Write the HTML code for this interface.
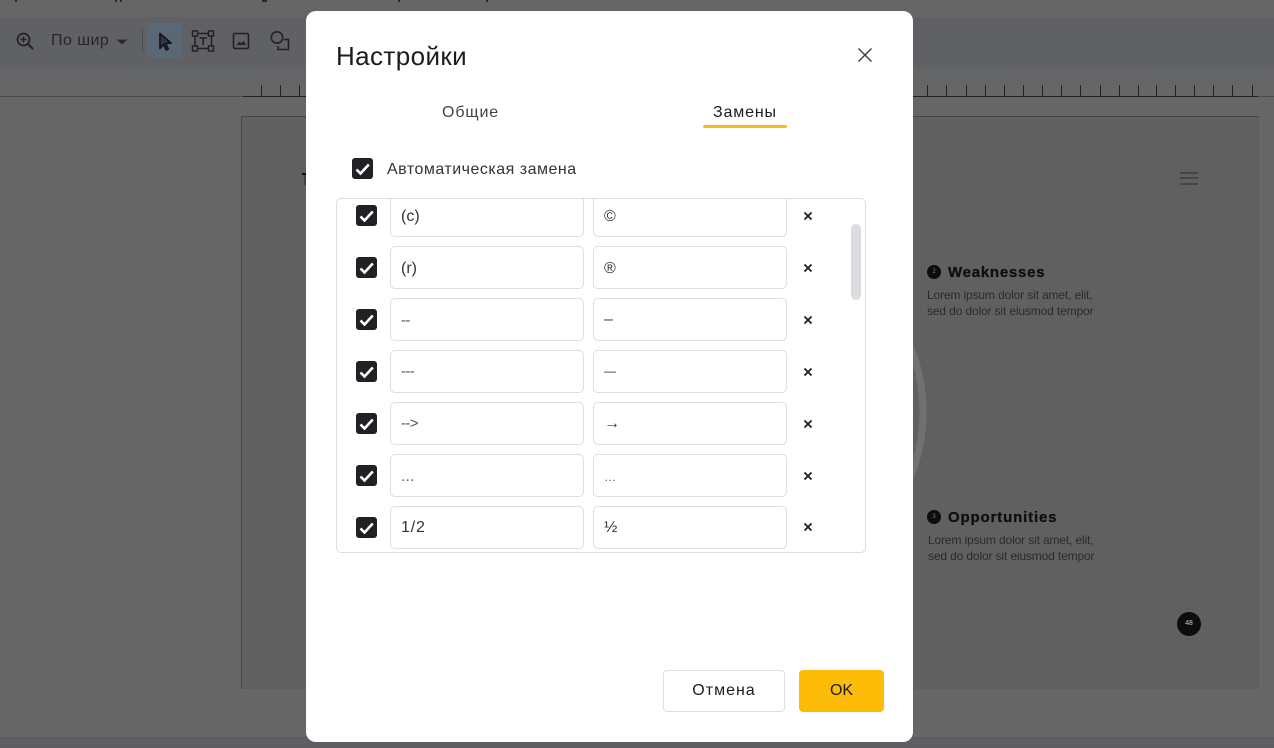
<!DOCTYPE html>
<html lang="ru">
<head>
<meta charset="utf-8">
<title>Настройки</title>
<style>
html,body{margin:0;padding:0;width:1274px;height:748px;overflow:hidden;background:#666666;font-family:"Liberation Sans","DejaVu Sans",sans-serif}
.a{position:absolute}
#toolbar{left:0;top:17px;width:1274px;height:50px;background:#5f6164}
#strip{left:0;top:67px;width:1274px;height:30px;background:linear-gradient(#646566,#666)}
#bottom{left:0;top:737px;width:1274px;height:11px;background:#5e5f62;border-top:1px solid #5a5b5c;box-sizing:border-box}
#slide{left:241px;top:116px;width:1018px;height:573px;background:#606060;border-top:1px solid #464646;border-left:1px solid #464646;border-right:1px solid #5b5b5b;box-sizing:border-box}
.tk{position:absolute;top:85px;width:1px;height:11px;background:#222}
.d{position:absolute;top:0;height:2px;width:2px;background:#2a2a2a}
.h{position:absolute;font-weight:bold;font-size:15px;color:#0f0f0f;letter-spacing:.7px;line-height:18px;white-space:nowrap;-webkit-text-stroke:.3px #0f0f0f}
.p{position:absolute;font-size:12px;line-height:16px;color:#2a2b2d;white-space:nowrap;letter-spacing:-.14px}
.n{position:absolute;width:14px;height:14px;border-radius:50%;background:#0d0d0d;color:#777;font-size:6px;line-height:14px;text-align:center}
#dialog{left:306px;top:11px;width:607px;height:731px;background:#fff;border-radius:10px}
.txt{position:absolute;white-space:nowrap;color:#1f1f1f}
.cb{position:absolute;width:21px;height:21px;background:#202124;border-radius:3px}
.cb svg{display:block}
.in{position:absolute;width:194px;height:43px;box-sizing:border-box;border:1px solid #dcdee0;border-radius:5px;background:#fff;font-size:16px;line-height:43px;padding-left:10px;color:#333;white-space:nowrap}
.x{position:absolute;left:802px;width:12px;height:12px}
.lt{color:#555;letter-spacing:-.6px;font-size:15px}
</style>
</head>
<body>
<div class="d" style="left:15px"></div><div class="d" style="left:115px"></div><div class="d" style="left:120px"></div><div class="d" style="left:262px;width:5px"></div><div class="d" style="left:398px"></div><div class="d" style="left:486px"></div>

<div class="a" id="toolbar"></div>
<div class="a" id="strip"></div>
<div class="a" style="left:0;top:96px;width:1274px;height:1px;background:#4b4b4b"></div>
<div class="a" style="left:243px;top:96px;width:64px;height:1px;background:#222"></div>
<div class="a" style="left:913px;top:96px;width:345px;height:1px;background:#222"></div>

<div class="tk" style="left:261px"></div><div class="tk" style="left:280px"></div><div class="tk" style="left:299px"></div>
<div class="tk" style="left:927px"></div><div class="tk" style="left:946px"></div><div class="tk" style="left:966px"></div><div class="tk" style="left:985px"></div><div class="tk" style="left:1004px"></div><div class="tk" style="left:1023px"></div><div class="tk" style="left:1042px"></div><div class="tk" style="left:1061px"></div><div class="tk" style="left:1080px"></div><div class="tk" style="left:1100px"></div><div class="tk" style="left:1119px"></div><div class="tk" style="left:1138px"></div><div class="tk" style="left:1156px"></div><div class="tk" style="left:1175px"></div><div class="tk" style="left:1194px"></div><div class="tk" style="left:1213px"></div><div class="tk" style="left:1232px"></div><div class="tk" style="left:1252px"></div>

<svg class="a" style="left:0;top:17px" width="306" height="50" viewBox="0 17 306 50" fill="none">
  <circle cx="23.500" cy="39.500" r="6" stroke="#222" stroke-width="1.700"/>
  <path d="M28 44l5 5" stroke="#222" stroke-width="2"/>
  <path d="M23.500 36.500v6M20.500 39.500h6" stroke="#222" stroke-width="1.400"/>
  <path d="M116.500 39.500h11l-5.500 5z" fill="#2a2a2a"/>
  <rect x="142" y="29" width="1" height="23" fill="#4a4b4d"/>
  <rect x="147" y="23" width="35" height="35" rx="3" fill="#5a6875"/>
  <path d="M160 33.500l0 15 3.500-4 2.800 5.500 2-1-2.700-5.500 5.400-.5z" fill="#2c3644" stroke="#10141c" stroke-width="1.700" stroke-linejoin="round"/>
  <path d="M194 33.500h18M194 48.500h18M195 33v16M211.500 33v16" stroke="#222" stroke-width="1.500"/>
  <rect x="192.500" y="31" width="5" height="5" fill="#5f6164" stroke="#222" stroke-width="1.500"/>
  <rect x="208.500" y="31" width="5" height="5" fill="#5f6164" stroke="#222" stroke-width="1.500"/>
  <rect x="192.500" y="46" width="5" height="5" fill="#5f6164" stroke="#222" stroke-width="1.500"/>
  <rect x="208.500" y="46" width="5" height="5" fill="#5f6164" stroke="#222" stroke-width="1.500"/>
  <path d="M199.500 38h7.500M203.200 38v7" stroke="#222" stroke-width="1.600"/>
  <rect x="233.500" y="33.500" width="15" height="15" rx="1.500" stroke="#222" stroke-width="1.600"/>
  <path d="M236.500 45l3-3.500 2 2 2-2.800 2.500 4.300z" fill="#222"/>
  <circle cx="277" cy="37.500" r="5.700" stroke="#222" stroke-width="1.600"/>
  <path d="M284 39.500h4.500v10h-10.500v-3.500" stroke="#222" stroke-width="1.600"/>
</svg>
<div class="a txt" style="left:51px;top:31px;font-size:16px;line-height:20px;color:#262626;letter-spacing:.45px">По шир</div>

<div class="a" id="slide"></div>
<div class="a" style="left:302px;top:173px;width:4px;height:2px;background:#111"></div>
<div class="a" style="left:304px;top:175px;width:2px;height:10px;background:#444"></div>
<svg class="a" style="left:906px;top:330px" width="30" height="165" fill="none"><circle cx="-158" cy="82" r="175" stroke="#707272" stroke-width="7"/></svg>
<div class="a" style="left:1180px;top:172px;width:18px;height:2px;background:#464646"></div>
<div class="a" style="left:1180px;top:177px;width:18px;height:2px;background:#464646"></div>
<div class="a" style="left:1180px;top:183px;width:18px;height:2px;background:#464646"></div>

<div class="n" style="left:927px;top:265px">2</div>
<div class="h" style="left:948px;top:264px;letter-spacing:.75px">Weaknesses</div>
<div class="p" style="left:927px;top:287px">Lorem ipsum dolor sit amet, elit,<br>sed do dolor sit eiusmod tempor</div>
<div class="n" style="left:927px;top:510px">3</div>
<div class="h" style="left:948px;top:509px;letter-spacing:.85px">Opportunities</div>
<div class="p" style="left:928px;top:532px">Lorem ipsum dolor sit amet, elit,<br>sed do dolor sit eiusmod tempor</div>
<div class="n" style="left:1177px;top:612px;width:24px;height:24px;line-height:23px;font-size:7px;color:#999;font-weight:bold">48</div>

<div class="a" id="bottom"></div>
<div class="a" id="dialog"></div>
<div class="a txt" style="left:336px;top:41px;font-size:26px;line-height:30px;color:#1c1c1c;letter-spacing:.4px">Настройки</div>
<svg class="a" style="left:857px;top:47px" width="16" height="16" fill="none"><path d="M1.500 1.500l13 13M14.500 1.500l-13 13" stroke="#444" stroke-width="1.500"/></svg>
<div class="a txt" style="left:442px;top:103px;font-size:16px;line-height:20px;color:#444;letter-spacing:.9px">Общие</div>
<div class="a txt" style="left:713px;top:103px;font-size:16px;line-height:20px;color:#1c1c1c;letter-spacing:.85px">Замены</div>
<div class="a" style="left:703px;top:125px;width:84px;height:3px;background:#f8bd12;border-radius:2px"></div>

<div class="cb" style="left:352px;top:158px"><svg width="21" height="21" fill="none"><path d="M4.500 11.500l4 4L16.800 6.500" stroke="#fff" stroke-width="2.600"/></svg></div>
<div class="a txt" style="left:387px;top:160px;font-size:16px;line-height:20px;color:#333;letter-spacing:.5px">Автоматическая замена</div>

<div class="a" style="left:851px;top:224px;width:10px;height:76px;background:#dadce0;border-radius:5px"></div>

<div class="cb" style="left:356px;top:205px"><svg width="21" height="21" fill="none"><path d="M4.500 11.500l4 4L16.800 6.500" stroke="#fff" stroke-width="2.600"/></svg></div>
<div class="in" style="left:390px;top:199px;border-top:0;border-radius:0 0 5px 5px;height:38px;line-height:36px">(c)</div>
<div class="in" style="left:593px;top:199px;border-top:0;border-radius:0 0 5px 5px;height:38px;line-height:36px">©</div>
<svg class="x" style="top:210px" fill="none"><path d="M2.500 2.500l7 7M9.500 2.500l-7 7" stroke="#222" stroke-width="1.900"/></svg>

<div class="cb" style="left:356px;top:257px"><svg width="21" height="21" fill="none"><path d="M4.500 11.500l4 4L16.800 6.500" stroke="#fff" stroke-width="2.600"/></svg></div>
<div class="in" style="left:390px;top:246px">(r)</div>
<div class="in" style="left:593px;top:246px">®</div>
<svg class="x" style="top:262px" fill="none"><path d="M2.500 2.500l7 7M9.500 2.500l-7 7" stroke="#222" stroke-width="1.900"/></svg>

<div class="cb" style="left:356px;top:309px"><svg width="21" height="21" fill="none"><path d="M4.500 11.500l4 4L16.800 6.500" stroke="#fff" stroke-width="2.600"/></svg></div>
<div class="in" style="left:390px;top:298px"><span class="lt">--</span></div>
<div class="in" style="left:593px;top:298px"><span style="position:relative;top:-1px;color:#444">–</span></div>
<svg class="x" style="top:314px" fill="none"><path d="M2.500 2.500l7 7M9.500 2.500l-7 7" stroke="#222" stroke-width="1.900"/></svg>

<div class="cb" style="left:356px;top:361px"><svg width="21" height="21" fill="none"><path d="M4.500 11.500l4 4L16.800 6.500" stroke="#fff" stroke-width="2.600"/></svg></div>
<div class="in" style="left:390px;top:350px"><span class="lt" style="position:relative;top:-1px">---</span></div>
<div class="in" style="left:593px;top:350px"><span style="font-size:12px;position:relative;top:-2px">—</span></div>
<svg class="x" style="top:366px" fill="none"><path d="M2.500 2.500l7 7M9.500 2.500l-7 7" stroke="#222" stroke-width="1.900"/></svg>

<div class="cb" style="left:356px;top:413px"><svg width="21" height="21" fill="none"><path d="M4.500 11.500l4 4L16.800 6.500" stroke="#fff" stroke-width="2.600"/></svg></div>
<div class="in" style="left:390px;top:402px"><span class="lt" style="position:relative;top:-1px">--&gt;</span></div>
<div class="in" style="left:593px;top:402px"><span style="position:relative;top:-1px">→</span></div>
<svg class="x" style="top:418px" fill="none"><path d="M2.500 2.500l7 7M9.500 2.500l-7 7" stroke="#222" stroke-width="1.900"/></svg>

<div class="cb" style="left:356px;top:465px"><svg width="21" height="21" fill="none"><path d="M4.500 11.500l4 4L16.800 6.500" stroke="#fff" stroke-width="2.600"/></svg></div>
<div class="in" style="left:390px;top:454px"><span style="color:#666">...</span></div>
<div class="in" style="left:593px;top:454px"><span style="color:#555;font-size:12px">…</span></div>
<svg class="x" style="top:470px" fill="none"><path d="M2.500 2.500l7 7M9.500 2.500l-7 7" stroke="#222" stroke-width="1.900"/></svg>

<div class="cb" style="left:356px;top:517px"><svg width="21" height="21" fill="none"><path d="M4.500 11.500l4 4L16.800 6.500" stroke="#fff" stroke-width="2.600"/></svg></div>
<div class="in" style="left:390px;top:506px;line-height:41px;letter-spacing:.8px">1/2</div>
<div class="in" style="left:593px;top:506px;line-height:41px">½</div>
<svg class="x" style="top:521px" fill="none"><path d="M2.500 2.500l7 7M9.500 2.500l-7 7" stroke="#222" stroke-width="1.900"/></svg>

<div class="a" style="left:336px;top:198px;width:530px;height:355px;box-sizing:border-box;border:1px solid #dcdee0;border-radius:5px"></div>

<div class="a" style="left:663px;top:670px;width:122px;height:42px;box-sizing:border-box;border:1px solid #dcdee0;border-radius:4px;background:#fff;font-size:16px;line-height:40px;text-align:center;color:#1c1c1c;letter-spacing:1px">Отмена</div>
<div class="a" style="left:799px;top:670px;width:85px;height:42px;border-radius:4px;background:#fdbc07;font-size:16px;line-height:41px;text-align:center;color:#1c1c1c">OK</div>
</body>
</html>
